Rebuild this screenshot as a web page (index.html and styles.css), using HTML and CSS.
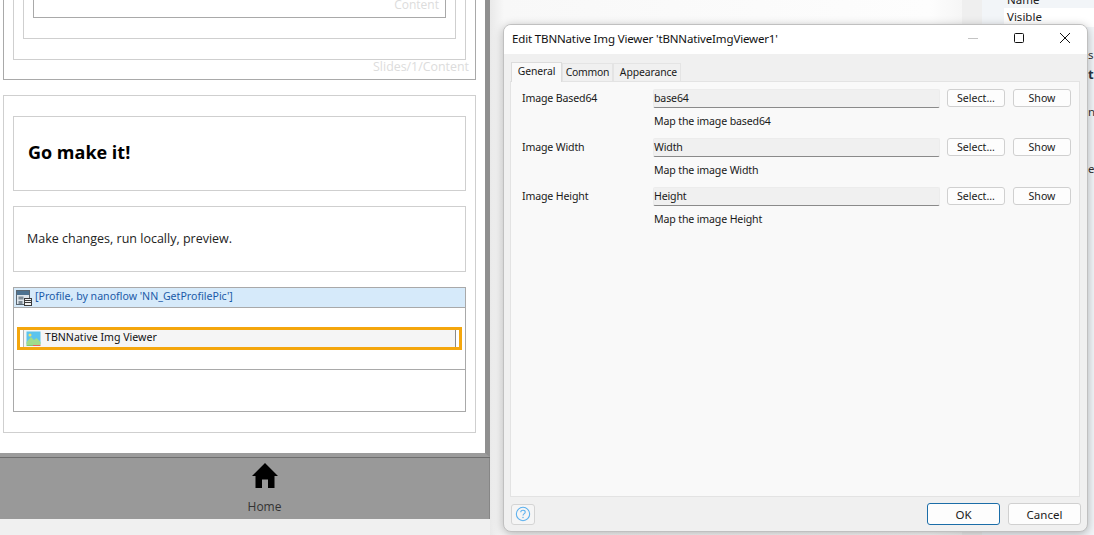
FILE: index.html
```html
<!DOCTYPE html>
<html lang="en">
<head>
<meta charset="utf-8">
<title>Edit TBNNative Img Viewer</title>
<link rel="stylesheet" href="styles.css">
</head>
<body>
<div class="screen">
  <main class="editor">
    <div class="canvas">
      <section class="slide-stack">
        <div class="box box-dark pad-outer">
          <div class="box pad-nest">
            <div class="box pad-nest">
              <div class="box box-dark content-box"><span class="ghost">Content</span></div>
            </div>
          </div>
          <div class="ghost slide-label">Slides/1/Content</div>
        </div>
      </section>
      <section class="box page-box">
        <div class="box title-box"><h1>Go make it!</h1></div>
        <div class="box text-box"><p>Make changes, run locally, preview.</p></div>
        <div class="dataview">
          <div class="dv-head">
            <svg class="dv-icon" viewBox="0 0 16 16" aria-hidden="true">
              <rect x="0.5" y="0.5" width="13" height="14" fill="#dfe6ec" stroke="#5a6670"/>
              <rect x="1" y="1" width="12" height="4" fill="#4d7290"/>
              <rect x="2.5" y="6.5" width="5" height="3" fill="#7e8b96"/>
              <rect x="2.5" y="11" width="4" height="3" fill="#7e8b96"/>
              <rect x="8.5" y="8.5" width="7" height="7" fill="#f2f2f2" stroke="#3a3a3a"/>
              <path d="M9 10.5h6M9 12.5h6" stroke="#3a3a3a" stroke-width="1"/>
            </svg>
            <span>[Profile, by nanoflow 'NN_GetProfilePic']</span>
          </div>
          <div class="dv-body">
            <div class="selected">
              <div class="widget">
                <svg class="img-icon" viewBox="0 0 15 15" aria-hidden="true">
                  <rect x="0.5" y="0.5" width="14" height="13" fill="#5cc4ee"/>
                  <path d="M0.5 11 L5 6 L8 9 L10.5 7 L14.5 11 V14 H0.5Z" fill="#9fdc8c"/>
                  <circle cx="4" cy="4" r="1.5" fill="#f4e16a"/>
                  <path d="M0.5 14.5 H7" stroke="#7bc96f"/>
                  <path d="M7 14.5 H14.5" stroke="#e8615f"/>
                </svg>
                <span>TBNNative Img Viewer</span>
              </div>
            </div>
          </div>
          <div class="dv-foot"></div>
        </div>
      </section>
    </div>
    <nav class="tabbar">
      <svg class="home" viewBox="0 0 26 25" aria-hidden="true">
        <path d="M13 0 L26 13 H22.5 V25 H16 V16.5 H10 V25 H3.5 V13 H0 Z" fill="#000"/>
      </svg>
      <span>Home</span>
    </nav>
    <div class="status"></div>
  </main>

  <aside class="backdrop">
    <div class="middle"></div>
    <div class="gutter"></div>
    <div class="props">
      <div class="prop-row prop-first"><span>Name</span></div>
      <div class="prop-row prop-alt"><span>Visible</span></div>
      <div class="prop-frag prop-s">s</div>
      <div class="prop-frag prop-ti">ti</div>
      <div class="prop-frag prop-n">n</div>
      <div class="prop-frag prop-es">es</div>
    </div>
  </aside>

  <div class="dialog">
    <header class="dlg-title">
      <span class="dlg-name">Edit TBNNative Img Viewer 'tBNNativeImgViewer1'</span>
      <div class="winbtns">
        <svg viewBox="0 0 12 12" aria-hidden="true"><path d="M1 6.5H11" stroke="#c4c4c4"/></svg>
        <svg viewBox="0 0 12 12" aria-hidden="true"><rect x="1.5" y="1.5" width="9" height="9" rx="1" fill="none" stroke="#111"/></svg>
        <svg viewBox="0 0 12 12" aria-hidden="true"><path d="M1 1L11 11M11 1L1 11" stroke="#111"/></svg>
      </div>
    </header>
    <div class="tabs">
      <div class="tab tab-active">General</div>
      <div class="tab tab-common">Common</div>
      <div class="tab tab-appear">Appearance</div>
    </div>
    <div class="panel">
      <div class="field">
        <label>Image Based64</label>
        <div class="field-main">
          <div class="input-row">
            <div class="input">base64</div>
            <button class="btn sel">Select...</button>
            <button class="btn show">Show</button>
          </div>
          <div class="hint">Map the image based64</div>
        </div>
      </div>
      <div class="field">
        <label>Image Width</label>
        <div class="field-main">
          <div class="input-row">
            <div class="input">Width</div>
            <button class="btn sel">Select...</button>
            <button class="btn show">Show</button>
          </div>
          <div class="hint">Map the image Width</div>
        </div>
      </div>
      <div class="field">
        <label>Image Height</label>
        <div class="field-main">
          <div class="input-row">
            <div class="input">Height</div>
            <button class="btn sel">Select...</button>
            <button class="btn show">Show</button>
          </div>
          <div class="hint">Map the image Height</div>
        </div>
      </div>
    </div>
    <footer class="dlg-foot">
      <button class="help" aria-label="Help">
        <svg viewBox="0 0 18 18" aria-hidden="true">
          <circle cx="9" cy="9" r="7.5" fill="none" stroke="#5bb0ee" stroke-width="1.2"/>
          <path d="M6.5 7C6.5 5.5 7.7 4.8 9 4.8C10.4 4.8 11.5 5.6 11.5 6.9C11.5 8.6 9 8.7 9 10.8" fill="none" stroke="#5bb0ee" stroke-width="1.2"/>
          <circle cx="9" cy="13" r="0.8" fill="#5bb0ee"/>
        </svg>
      </button>
      <div class="foot-btns">
        <button class="btn ok">OK</button>
        <button class="btn cancel">Cancel</button>
      </div>
    </footer>
  </div>
</div>
</body>
</html>
```
FILE: styles.css
```css
* { box-sizing: border-box; }
html, body { margin: 0; padding: 0; height: 100%; overflow: hidden; }
body { background: #f0f0f0; font-family: "Open Sans", "Noto Sans", sans-serif; color: #1a1a1a; }
h1, p { margin: 0; }
button { font: inherit; color: inherit; padding: 0; margin: 0; }

.screen { position: relative; display: flex; width: 1094px; height: 535px; overflow: hidden; }

/* editor on the left */
.editor { width: 490px; height: 535px; display: flex; flex-direction: column; flex: none; }
.canvas { height: 457px; flex: none; width: 490px; background: #fff; border-right: 5px solid #8f8f8f; border-bottom: 4px solid #9c9c9c; padding: 0 9px 0 3px; overflow: hidden; }
.box { border: 1px solid #cfcfcf; }
.box-dark { border-color: #a9a9a9; }
.slide-stack { margin-top: -60px; height: 140px; }
.pad-outer { height: 140px; padding: 0 9px 0 9px; }
.pad-nest { padding: 0 9px 20px 9px; border-top: 0; }
.pad-outer > .box { height: 119px; }
.pad-outer > .box > .box { height: 98px; }
.content-box { height: 77px; display: flex; align-items: flex-end; justify-content: flex-end; padding: 0 6px 4px 0; }
.ghost { color: #dcdcdc; font-size: 12px; line-height: 16px; }
.slide-label { text-align: right; margin-right: -3px; font-size: 12.4px; line-height: 13px; }
.page-box { margin-top: 15px; height: 338px; padding: 20px 9px 0; }
.title-box { height: 75px; display: flex; align-items: center; padding: 0 0 3px 14px; }
h1 { font-size: 18px; font-weight: 700; color: #000; }
.text-box { height: 66px; margin-top: 15px; display: flex; align-items: center; padding: 0 0 1px 13px; }
.text-box p { font-size: 12.5px; color: #222; }
.dataview { margin-top: 15px; height: 125px; border: 1px solid #a9a9a9; display: flex; flex-direction: column; }
.dv-head { height: 20px; flex: none; background: #d6eafa; border-bottom: 1px solid #a9a9a9; display: flex; align-items: center; gap: 4px; padding: 0 0 3px 2px; font-family: "Noto Sans", sans-serif; font-size: 10.6px; color: #1c5ba8; }
.dv-icon { width: 16px; height: 16px; flex: none; margin-top: 3px; margin-right: -1px; }
.dv-body { height: 62px; flex: none; padding: 19px 3px 0; border-bottom: 1px solid #a9a9a9; }
.selected { height: 23px; border: 3px solid #f4a60d; }
.widget { height: 17px; margin-left: 3px; margin-right: 3px; background: #f5f5f5; border-left: 1px solid #b5b5b5; border-right: 1px solid #8a8a8a; display: flex; align-items: center; gap: 4px; padding: 0 0 3px 2px; font-family: "Noto Sans", sans-serif; font-size: 10.6px; color: #111; }
.img-icon { width: 15px; height: 15px; flex: none; margin-top: 3px; }
.dv-foot { flex: 1; }

.tabbar { height: 62px; flex: none; width: 490px; background: #999; border-top: 1px solid #6e6e6e; display: flex; flex-direction: column; align-items: center; padding: 5px 0 0 40px; box-shadow: inset -1px 0 0 #868686; }
.home { width: 26px; height: 25px; flex: none; margin-bottom: 11px; }
.tabbar span { font-size: 12px; line-height: 16px; color: #333; margin-right: 1px; }
.status { flex: 1; background: #f0f0f0; }

/* panes behind the dialog */
.backdrop { flex: 1; display: flex; height: 535px; }
.middle { width: 472px; flex: none; background: linear-gradient(to right, #e9e9e9, #f8f8f8 14px, #fdfdfd 440px, #f6f6f6); }
.gutter { width: 20px; flex: none; background: #efefef; }
.props { position: relative; flex: 1; background: #f2f5f8; font-size: 11.5px; color: #222; font-family: "Noto Sans", sans-serif; }
.prop-row { height: 17px; line-height: 17px; padding-left: 22px; }
.prop-row span { display: block; padding-left: 3px; height: 100%; }
.prop-first { margin-top: -9px; height: 17px; }
.prop-alt { height: 19px; line-height: 18px; margin-top: 0; }
.prop-alt span { background: #fff; }
.prop-frag { position: absolute; left: 106px; color: #333; }
.prop-s { top: 47px; }
.prop-ti { top: 65px; font-weight: 700; font-size: 13px; color: #2a3644; }
.prop-n { top: 104px; }
.prop-es { top: 161px; }

/* dialog */
.dialog { position: absolute; left: 503px; top: 24px; width: 585px; height: 508px; background: #f0f0f0; border: 1px solid #c0c0c0; border-radius: 8px; box-shadow: 0 2px 10px rgba(0,0,0,.28); display: flex; flex-direction: column; overflow: hidden; font-family: "Noto Sans", sans-serif; font-size: 10.6px; letter-spacing: -0.15px; color: #1a1a1a; }
.dlg-title { height: 29px; flex: none; background: #fff; display: flex; align-items: center; justify-content: space-between; padding: 0 16px 3px 8px; }
.dlg-name { font-size: 11.5px; color: #111; }
.winbtns { display: flex; gap: 34px; }
.winbtns svg { width: 12px; height: 12px; display: block; }
.tabs { height: 27px; flex: none; display: flex; align-items: flex-end; padding-left: 7px; }
.tab { height: 18px; line-height: 17px; text-align: center; border: 1px solid #e4e4e4; border-bottom: 0; background: #f0f0f0; font-size: 10.4px; letter-spacing: -0.1px; }
.tab-active { width: 51px; height: 20px; line-height: 16px; background: #f9f9f9; border-color: #dcdcdc; margin-bottom: -1px; position: relative; }
.tab-common { width: 51px; letter-spacing: -0.25px; }
.tab-appear { width: 68px; padding-left: 3px; }
.panel { height: 416px; flex: none; margin: 0 7px 0 6px; background: #f9f9f9; border: 1px solid #e3e3e3; padding: 6px 8px 0 11px; }
.field { display: flex; height: 49px; }
.field label { width: 131px; flex: none; line-height: 18px; padding-top: 1px; }
.field-main { flex: 1; }
.input-row { display: flex; align-items: center; height: 20px; }
.input { width: 287px; height: 19px; background: #f0f0f0; border: 1px solid #ececec; border-bottom: 1px solid #8a8a8a; border-radius: 2px; padding-left: 0; line-height: 17px; }
.btn { height: 18px; width: 58px; background: #fdfdfd; border: 1px solid #d0d0d0; border-radius: 3px; font-size: 10.6px; line-height: 14px; text-align: center; }
.sel { margin-left: 7px; }
.show { margin-left: 8px; }
.hint { margin-top: 5px; padding-left: 1px; line-height: 17px; }
.dlg-foot { flex: 1; display: flex; justify-content: space-between; align-items: center; padding: 0 6px 0 7px; }
.help { width: 24px; height: 21px; background: #f5f5f5; border: 1px solid #d4d4d4; border-radius: 3px; display: flex; align-items: center; justify-content: center; }
.help svg { width: 16px; height: 16px; }
.foot-btns { display: flex; gap: 8px; }
.ok, .cancel { width: 73px; height: 22px; font-size: 11.5px; line-height: 19px; }
.ok { border: 1px solid #1b6da8; }
```
